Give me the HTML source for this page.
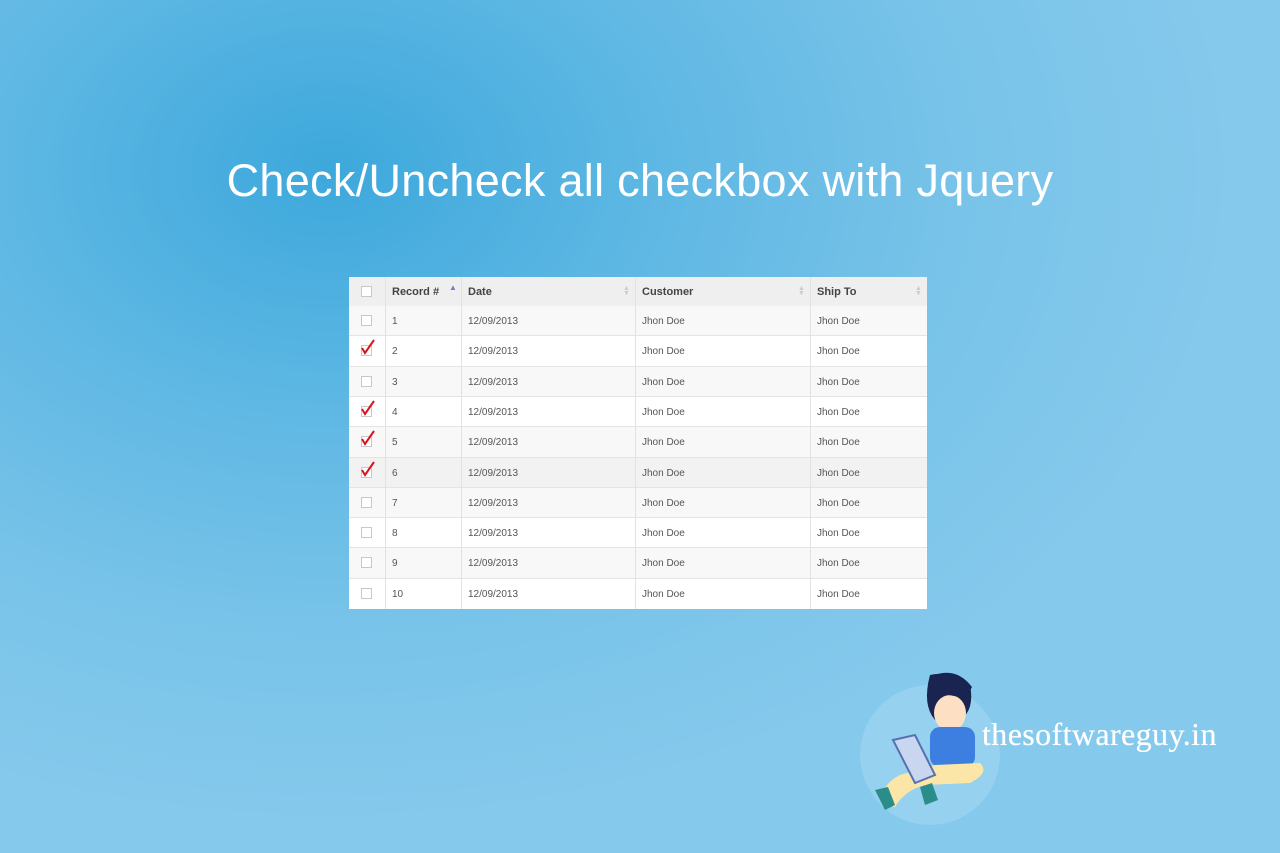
<!DOCTYPE html>
<html><head><meta charset="utf-8"><style>
html,body{margin:0;padding:0}
body{width:1280px;height:853px;overflow:hidden;position:relative;font-family:"Liberation Sans",sans-serif;
background:radial-gradient(ellipse 900px 650px at 330px 170px,#3da8dc 0%,#5db7e3 35%,#78c3e9 70%,#85c9ec 100%);}
h1{position:absolute;left:0;width:1280px;top:153px;margin:0;text-align:center;color:#fff;font-weight:normal;font-size:45px;letter-spacing:0.3px;line-height:55px}
.tbl{position:absolute;left:349px;top:277px;width:578px;height:332px;background:#fff}
.row{position:absolute;left:0;width:578px;height:30.4px;box-sizing:border-box;border-bottom:1px solid #e4e4e4;font-size:10px;color:#555}
.row.o{background:#f8f8f8}
.row.h{background:#efefef;height:29px;font-size:11px;font-weight:bold;color:#444;border-bottom:none}
.row.hv{background:#f2f2f2}
.c{position:absolute;top:1px;height:100%;line-height:30px}
.h .c{line-height:29px}
.vl{position:absolute;top:0;width:1px;height:332px;background:#e2e2e2}
.cb{position:absolute;left:12px;top:9px;width:11px;height:11px;border:1px solid #c8c8c8;background:#fff;box-sizing:border-box}
.chk{position:absolute;left:10px;top:2px}
.sort{position:absolute;top:9px;font-size:7px;color:#ccc;line-height:5px}
.logo{position:absolute;left:982px;top:716px;font-family:"Liberation Serif",serif;color:#fff;font-size:32px;letter-spacing:0.4px;text-shadow:0 0 0.6px #fff}
</style></head><body>
<h1>Check/Uncheck all checkbox with Jquery</h1>
<div class="tbl">
<div class="row h" style="top:0"><div class="cb"></div><div class="c" style="left:43px">Record #</div><div class="c" style="left:100px;top:-4px;color:#6a7fc8;font-size:8px">▲</div><div class="c" style="left:119px">Date</div><div class="sort" style="left:274px">▲<br>▼</div><div class="c" style="left:293px">Customer</div><div class="sort" style="left:449px">▲<br>▼</div><div class="c" style="left:468px">Ship To</div><div class="sort" style="left:566px">▲<br>▼</div></div>
<div class="row o" style="top:29px"><div class="cb"></div><div class="c" style="left:43px">1</div><div class="c" style="left:119px">12/09/2013</div><div class="c" style="left:293px">Jhon Doe</div><div class="c" style="left:468px">Jhon Doe</div></div>
<div class="row" style="top:59.3px"><div class="cb"></div><svg class="chk" width="18" height="18" viewBox="0 0 18 18"><path d="M3 10 L6 15 L15 2" stroke="#d8141c" stroke-width="2" fill="none"/></svg><div class="c" style="left:43px">2</div><div class="c" style="left:119px">12/09/2013</div><div class="c" style="left:293px">Jhon Doe</div><div class="c" style="left:468px">Jhon Doe</div></div>
<div class="row o" style="top:89.6px"><div class="cb"></div><div class="c" style="left:43px">3</div><div class="c" style="left:119px">12/09/2013</div><div class="c" style="left:293px">Jhon Doe</div><div class="c" style="left:468px">Jhon Doe</div></div>
<div class="row" style="top:119.9px"><div class="cb"></div><svg class="chk" width="18" height="18" viewBox="0 0 18 18"><path d="M3 10 L6 15 L15 2" stroke="#d8141c" stroke-width="2" fill="none"/></svg><div class="c" style="left:43px">4</div><div class="c" style="left:119px">12/09/2013</div><div class="c" style="left:293px">Jhon Doe</div><div class="c" style="left:468px">Jhon Doe</div></div>
<div class="row o" style="top:150.2px"><div class="cb"></div><svg class="chk" width="18" height="18" viewBox="0 0 18 18"><path d="M3 10 L6 15 L15 2" stroke="#d8141c" stroke-width="2" fill="none"/></svg><div class="c" style="left:43px">5</div><div class="c" style="left:119px">12/09/2013</div><div class="c" style="left:293px">Jhon Doe</div><div class="c" style="left:468px">Jhon Doe</div></div>
<div class="row hv" style="top:180.5px"><div class="cb"></div><svg class="chk" width="18" height="18" viewBox="0 0 18 18"><path d="M3 10 L6 15 L15 2" stroke="#d8141c" stroke-width="2" fill="none"/></svg><div class="c" style="left:43px">6</div><div class="c" style="left:119px">12/09/2013</div><div class="c" style="left:293px">Jhon Doe</div><div class="c" style="left:468px">Jhon Doe</div></div>
<div class="row o" style="top:210.8px"><div class="cb"></div><div class="c" style="left:43px">7</div><div class="c" style="left:119px">12/09/2013</div><div class="c" style="left:293px">Jhon Doe</div><div class="c" style="left:468px">Jhon Doe</div></div>
<div class="row" style="top:241.1px"><div class="cb"></div><div class="c" style="left:43px">8</div><div class="c" style="left:119px">12/09/2013</div><div class="c" style="left:293px">Jhon Doe</div><div class="c" style="left:468px">Jhon Doe</div></div>
<div class="row o" style="top:271.4px"><div class="cb"></div><div class="c" style="left:43px">9</div><div class="c" style="left:119px">12/09/2013</div><div class="c" style="left:293px">Jhon Doe</div><div class="c" style="left:468px">Jhon Doe</div></div>
<div class="row" style="top:301.7px;border-bottom:none"><div class="cb"></div><div class="c" style="left:43px">10</div><div class="c" style="left:119px">12/09/2013</div><div class="c" style="left:293px">Jhon Doe</div><div class="c" style="left:468px">Jhon Doe</div></div>
<div class="vl" style="left:36px"></div><div class="vl" style="left:112px"></div><div class="vl" style="left:286px"></div><div class="vl" style="left:461px"></div>
</div>
<svg style="position:absolute;left:860px;top:665px" width="140" height="160" viewBox="0 0 140 160">
<ellipse cx="70" cy="90" rx="70" ry="70" fill="#a8daf3" opacity="0.5"/>
<path d="M70 10 Q90 5 110 20 Q115 45 100 55 L75 55 Q62 40 70 10Z" fill="#1a2450"/>
<ellipse cx="90" cy="48" rx="16" ry="18" fill="#fde0c4"/>
<path d="M70 12 Q95 0 112 22 L105 35 Q85 25 72 35Z" fill="#1a2450"/>
<rect x="70" y="62" width="45" height="40" rx="10" fill="#3c7fe0"/>
<path d="M40 110 Q20 120 22 140 L35 142 Q45 125 65 120 L110 118 Q130 108 120 98 L75 100Z" fill="#fbe6a8"/>
<path d="M33 75 L55 70 L75 110 L55 118Z" fill="#c9d6f0" stroke="#5870b0" stroke-width="2"/>
<path d="M15 125 L25 145 L35 140 L28 122Z" fill="#2a8d8a"/>
<path d="M60 122 L65 140 L78 135 L72 118Z" fill="#2a8d8a"/>
</svg>
<div class="logo">thesoftwareguy.in</div>
</body></html>
